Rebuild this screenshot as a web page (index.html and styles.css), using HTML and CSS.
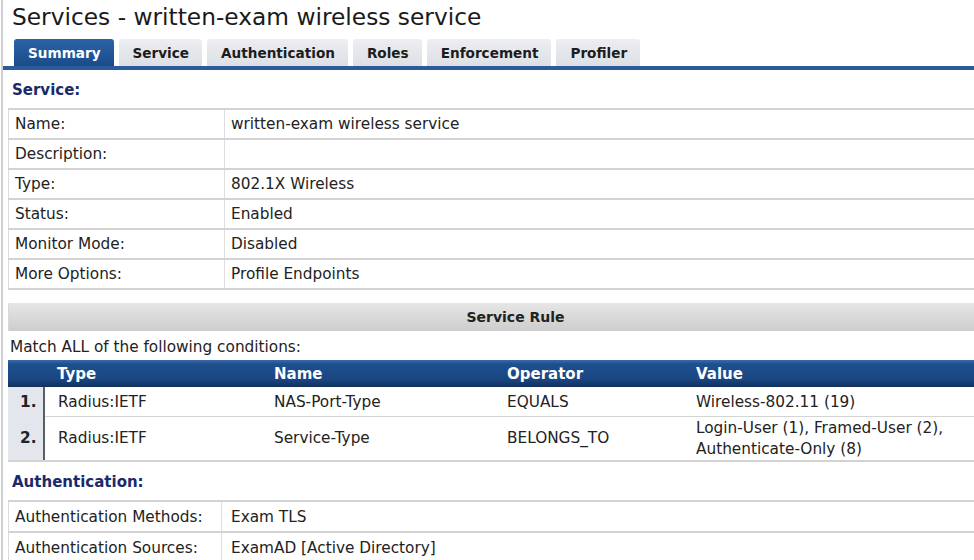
FILE: index.html
```html
<!DOCTYPE html>
<html lang="en">
  <head>
    <meta charset="UTF-8" />
    <title>Services - written-exam wireless service</title>
    <link rel="stylesheet" href="styles.css">
  </head>
  <body>
    <div class="page">
      <h1 class="title">Services - written-exam wireless service</h1>

      <div class="tabs">
        <span class="tab active">Summary</span>
        <span class="tab">Service</span>
        <span class="tab">Authentication</span>
        <span class="tab">Roles</span>
        <span class="tab">Enforcement</span>
        <span class="tab">Profiler</span>
      </div>

      <div class="content">
        <h2 class="section">Service:</h2>
        <table class="details">
          <tr><td class="label">Name:</td><td>written-exam wireless service</td></tr>
          <tr><td class="label">Description:</td><td></td></tr>
          <tr><td class="label">Type:</td><td>802.1X Wireless</td></tr>
          <tr><td class="label">Status:</td><td>Enabled</td></tr>
          <tr><td class="label">Monitor Mode:</td><td>Disabled</td></tr>
          <tr><td class="label">More Options:</td><td>Profile Endpoints</td></tr>
        </table>

        <div class="rule-bar">Service Rule</div>
        <p class="match">Match ALL of the following conditions:</p>

        <table class="rules">
          <thead>
            <tr>
              <th class="num"></th>
              <th class="c-type">Type</th>
              <th class="c-name">Name</th>
              <th class="c-op">Operator</th>
              <th>Value</th>
            </tr>
          </thead>
          <tbody>
            <tr>
              <td class="num">1.</td>
              <td>Radius:IETF</td>
              <td>NAS-Port-Type</td>
              <td>EQUALS</td>
              <td>Wireless-802.11 (19)</td>
            </tr>
            <tr>
              <td class="num">2.</td>
              <td>Radius:IETF</td>
              <td>Service-Type</td>
              <td>BELONGS_TO</td>
              <td>Login-User (1), Framed-User (2),<br>Authenticate-Only (8)</td>
            </tr>
          </tbody>
        </table>

        <h2 class="section auth">Authentication:</h2>
        <table class="details auth-table">
          <tr><td class="label">Authentication Methods:</td><td>Exam TLS</td></tr>
          <tr><td class="label">Authentication Sources:</td><td>ExamAD [Active Directory]</td></tr>
        </table>
      </div>
    </div>
  </body>
</html>
```

FILE: styles.css
```css
html,
body {
  margin: 0;
  overflow: hidden;
  background-color: #fff;
}

body {
  font-family: "DejaVu Sans", Verdana, sans-serif;
  font-size: 15.3px;
  color: #222;
}

.page {
  width: 971px;
  margin-left: 1px;
  border-left: 2px solid #cfd0d2;
  min-height: 560px;
}

.title {
  margin: 0;
  padding: 0 0 0 9px;
  height: 39px;
  line-height: 33px;
  font-size: 23.3px;
  font-weight: normal;
  color: #1a1a1a;
}

.tabs {
  display: flex;
  gap: 5px;
  padding-left: 11px;
  border-bottom: 4px solid #2b5b9a;
}

.tab {
  height: 27px;
  line-height: 28px;
  padding: 0 13px 0 14px;
  font-size: 13.6px;
  font-weight: bold;
  color: #1c1c1c;
  background: linear-gradient(#eceef1, #dcdfe4);
  border-radius: 3px 3px 0 0;
}

.tab.active {
  color: #fff;
  background: linear-gradient(#2b63a6, #1a4b8a);
}

.content {
  padding-left: 5px;
}

.section {
  margin: 0;
  height: 38px;
  line-height: 41px;
  padding-left: 4px;
  font-size: 15px;
  font-weight: bold;
  color: #1b2a6b;
}

.details {
  width: 100%;
  border-collapse: collapse;
  border-top: 2px solid #d2d2d2;
  border-left: 1px solid #dcdcdc;
}

.details td {
  height: 28px;
  padding: 0 6px;
  border-bottom: 2px solid #d2d2d2;
}

.details td.label {
  width: 203px;
  border-right: 1px solid #dedede;
}

.rule-bar {
  margin-top: 13px;
  height: 28px;
  line-height: 28px;
  padding-left: 48px;
  text-align: center;
  font-weight: bold;
  font-size: 14px;
  color: #222;
  background: linear-gradient(#e6e6e6, #cdcdcd);
  border-left: 1px solid #d8d8d8;
}

.match {
  margin: 0;
  height: 29px;
  line-height: 33px;
  padding-left: 2px;
}

.rules {
  width: 100%;
  border-collapse: collapse;
}

.rules th {
  height: 27px;
  padding: 0 7px 0 13px;
  text-align: left;
  font-size: 15px;
  color: #fff;
  background: linear-gradient(#3a6aa8 0, #1f4f8e 15%, #1a4682 72%, #112f5c 100%);
}

.rules th.num,
.rules td.num {
  width: 16px;
}

.rules th.c-type {
  width: 197px;
}

.rules th.c-name {
  width: 213px;
}

.rules th.c-op {
  width: 169px;
}

.rules td {
  height: 29px;
  padding: 0 7px 0 13px;
  border-bottom: 1px solid #d4d4d4;
}

.rules tbody tr:last-child td {
  height: 43px;
  line-height: 21px;
  border-bottom: 2px solid #d2d2d2;
}

.rules td.num {
  padding: 0 0 0 12px;
  font-weight: bold;
  background-color: #e3e7ed;
  border-right: 2px solid #5a5f66;
  border-bottom-color: #e3e7ed;
}

.rules tbody tr:last-child td.num {
  border-bottom-color: #d2d2d2;
}

.section.auth {
  height: 38px;
}

.auth-table td {
  height: 29px;
}

.auth-table td.label {
  width: 200px;
}

.auth-table td + td {
  padding-left: 9px;
}
```
